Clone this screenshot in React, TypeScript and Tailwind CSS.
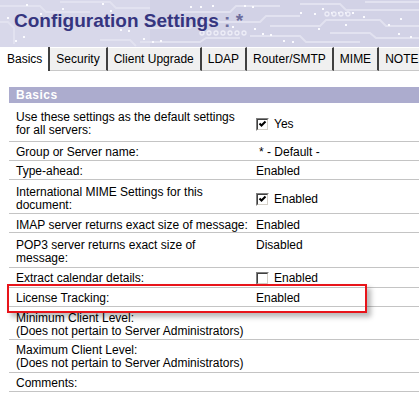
import React from "react";

const traces = [
  "0,6 40,6 46,12 90,12",
  "60,2 110,2 116,8 150,8",
  "0,22 8,22 14,28 14,44",
  "150,28 190,28 196,22 260,22 266,16 300,16",
  "300,4 340,4 346,10 419,10",
  "270,26 320,26 326,20 380,20 386,26 419,26",
  "250,36 300,36 306,42 360,42",
  "140,42 200,42 206,38 240,38",
  "330,33 370,33 376,38 419,38",
  "180,12 230,12 236,6 280,6",
  "365,2 419,2",
  "100,40 130,40 136,46",
];

const dots: [number, number][] = [
  [7, 17], [26, 4], [40, 13], [62, 8], [102, 3], [110, 10], [190, 6], [200, 6], [212, 5], [244, 5], [252, 6],
  [300, 12], [314, 13], [322, 8], [331, 12], [338, 12], [345, 12], [352, 12], [363, 16], [388, 24], [400, 18],
  [15, 40], [23, 36], [143, 38], [152, 41], [160, 40], [270, 34], [283, 40], [292, 41], [318, 28], [345, 24],
  [398, 33], [410, 36], [232, 26], [254, 28], [262, 33], [120, 29], [128, 30],
];

const rings: [number, number][] = [
  [202, 33], [209, 33], [216, 33], [223, 33], [230, 33], [237, 33], [244, 33],
  [327, 14], [334, 14], [341, 14], [348, 14],
];

function HeaderPattern() {
  return (
    <svg className="absolute inset-0" width="419" height="47" viewBox="0 0 419 47">
      <rect width="419" height="47" fill="#d2d2e6" />
      <rect width="150" height="47" fill="#d8d8ea" />
      {traces.map((p, i) => (
        <polyline key={i} points={p} fill="none" stroke="#e2e2f0" strokeWidth="2" />
      ))}
      {dots.map(([x, y], i) => (
        <rect key={i} x={x} y={y} width="2" height="2" fill="#fbfbff" />
      ))}
      {rings.map(([x, y], i) => (
        <circle key={i} cx={x} cy={y} r="2" fill="none" stroke="#ededf7" strokeWidth="1.3" />
      ))}
    </svg>
  );
}

function Checkbox({ checked }: { checked?: boolean }) {
  return (
    <span className="inline-flex w-[13px] h-[13px] shrink-0 border border-t-[#808080] border-l-[#808080] border-b-white border-r-white">
      <span className="flex-1 border border-t-[#404040] border-l-[#404040] border-b-[#d4d0c8] border-r-[#d4d0c8] bg-white">
        {checked && (
          <svg width="9" height="9" viewBox="0 0 9 9">
            <path d="M1.5 3.5 L3.5 5.5 L7.5 1.5" fill="none" stroke="#000" strokeWidth="2" />
          </svg>
        )}
      </span>
    </span>
  );
}

const tabs = ["Basics", "Security", "Client Upgrade", "LDAP", "Router/SMTP", "MIME", "NOTES.INI"];

type Row = {
  label: string[];
  value?: React.ReactNode;
  pad: string;
  center?: boolean;
};

const rows: Row[] = [
  {
    label: ["Use these settings as the default settings", "for all servers:"],
    value: (
      <>
        <Checkbox checked />
        <span>Yes</span>
      </>
    ),
    pad: "pt-[8px] pb-[4px]",
    center: true,
  },
  { label: ["Group or Server name:"], value: <span className="pl-[3px]">* - Default -</span>, pad: "pt-[4px] pb-[1px]" },
  { label: ["Type-ahead:"], value: "Enabled", pad: "pt-[4px] pb-[1px]" },
  {
    label: ["International MIME Settings for this", "document:"],
    value: (
      <>
        <Checkbox checked />
        <span>Enabled</span>
      </>
    ),
    pad: "pt-[6px] pb-[1px]",
    center: true,
  },
  { label: ["IMAP server returns exact size of message:"], value: "Enabled", pad: "pt-[5px] pb-0" },
  { label: ["POP3 server returns exact size of", "message:"], value: "Disabled", pad: "pt-[6px] pb-[2px]" },
  {
    label: ["Extract calendar details:"],
    value: (
      <>
        <Checkbox />
        <span>Enabled</span>
      </>
    ),
    pad: "pt-[4px] pb-[2px]",
  },
  { label: ["License Tracking:"], value: "Enabled", pad: "pt-[4px] pb-[1px]" },
  { label: ["Minimum Client Level:", "(Does not pertain to Server Administrators)"], pad: "pt-[5px] pb-[1px]" },
  { label: ["Maximum Client Level:", "(Does not pertain to Server Administrators)"], pad: "pt-[4px] pb-[2px]" },
  { label: ["Comments:"], pad: "pt-[4px] pb-[1px]" },
];

export default function App() {
  return (
    <div className="w-[419px] h-[405px] overflow-hidden bg-white text-black font-['Liberation_Sans',Arial,sans-serif] text-[12px]">
      <div className="relative h-[47px]">
        <HeaderPattern />
        <h1 className="relative pl-[14px] pt-[11px] text-[19px] leading-[19px] font-bold text-[#35357f] whitespace-nowrap">
          Configuration Settings <span className="text-[#6c6c9c]">: *</span>
        </h1>
      </div>

      <div className="flex h-[24px] whitespace-nowrap">
        {tabs.map((t, i) => (
          <div
            key={t}
            className={
              i === 0
                ? "flex items-center px-[6px] bg-white border-r-2 border-r-[#404040] border-l border-l-white shrink-0"
                : "flex items-center px-[6px] bg-[#f0f0f0] border-r-2 border-r-[#404040] border-b border-b-[#c8c8c8] border-t border-t-white shrink-0"
            }
          >
            {t}
          </div>
        ))}
      </div>

      <div className="ml-[9px] mt-[16px]">
        <div className="h-[16px] bg-[#acacce] pl-[7px] flex items-center text-white font-bold tracking-[0.5px]">
          Basics
        </div>
        {rows.map((r, i) => (
          <div
            key={i}
            className={`relative grid grid-cols-[246px_1fr] border-b border-[#c4c4c4] leading-[13px] ${r.pad}`}
          >
            <div className="pl-[7px] whitespace-nowrap">
              {r.label.map((l, j) => (
                <div key={j}>{l}</div>
              ))}
            </div>
            <div className={`flex gap-[5px] pl-[1px] whitespace-nowrap ${r.center ? "items-center" : "items-start"}`}>
              {r.value}
            </div>
            {r.label[0] === "License Tracking:" && (
              <div className="absolute left-[-2px] top-[-4px] w-[360px] h-[29px] border-2 border-[#e8141a] shadow-[4px_4px_5px_rgba(0,0,0,0.28)]" />
            )}
          </div>
        ))}
      </div>
    </div>
  );
}
